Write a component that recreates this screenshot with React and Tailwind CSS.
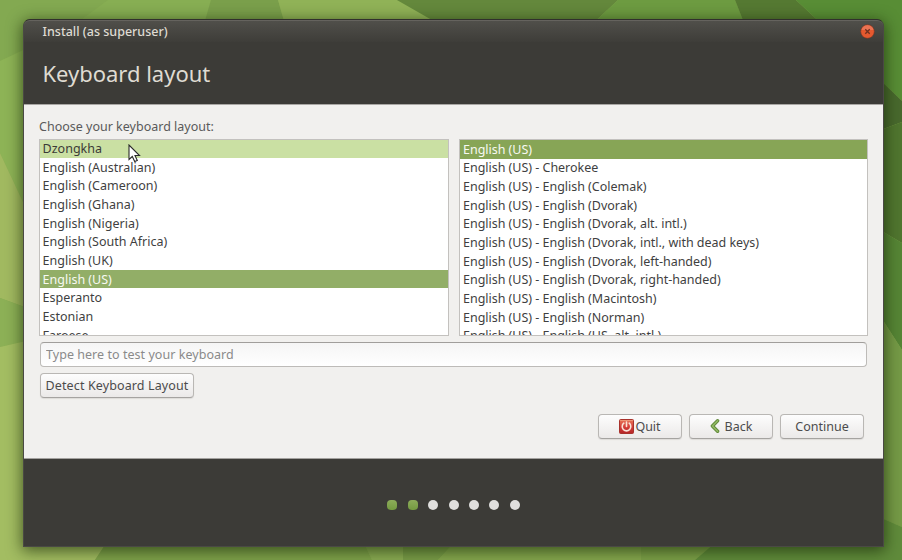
const LEFT = [
  ["Dzongkha", "hover"],
  ["English (Australian)"],
  ["English (Cameroon)"],
  ["English (Ghana)"],
  ["English (Nigeria)"],
  ["English (South Africa)"],
  ["English (UK)"],
  ["English (US)", "selected"],
  ["Esperanto"],
  ["Estonian"],
  ["Faroese"],
];

const RIGHT = [
  ["English (US)", "active"],
  ["English (US) - Cherokee"],
  ["English (US) - English (Colemak)"],
  ["English (US) - English (Dvorak)"],
  ["English (US) - English (Dvorak, alt. intl.)"],
  ["English (US) - English (Dvorak, intl., with dead keys)"],
  ["English (US) - English (Dvorak, left-handed)"],
  ["English (US) - English (Dvorak, right-handed)"],
  ["English (US) - English (Macintosh)"],
  ["English (US) - English (Norman)"],
  ["English (US) - English (US, alt. intl.)"],
];

const ROW_STYLES = {
  hover: "bg-[#cae0a3] text-[#3c3b37]",
  selected: "bg-[#92ae67] text-[#f7f9f2]",
  active: "bg-[#87a556] text-[#f7f9f2]",
};

function Wallpaper() {
  return (
    <svg className="absolute inset-0 h-full w-full" viewBox="0 0 902 560" preserveAspectRatio="none">
      <rect width="902" height="560" fill="#86aa50" />
      <path d="M0 0H108L70 28L0 61Z" fill="#83a951" />
      <path d="M108 0H211L203 28H70Z" fill="#87ae53" />
      <path d="M0 61L70 28V40L0 70Z" fill="#8db356" />
      <path d="M211 0H278L286 28H203Z" fill="#7a9f4b" />
      <path d="M278 0H397L446 28H286Z" fill="#90b257" />
      <path d="M397 0H618L588 28H446Z" fill="#64883c" />
      <path d="M618 0H735L746 28H588Z" fill="#6d9b41" />
      <path d="M735 0H796L826 28H746Z" fill="#557932" />
      <path d="M796 0H902V101L870 70L826 28Z" fill="#588d35" />
      <path d="M870 70L902 101V122L870 134Z" fill="#48692d" />
      <path d="M870 134L902 122V243L870 224Z" fill="#50762f" />
      <path d="M870 224L902 243V350L870 300Z" fill="#568535" />
      <path d="M870 300L902 350V527L870 513Z" fill="#759a46" />
      <path d="M870 513L902 527V560H870Z" fill="#608b3b" />
      <path d="M0 64L30 49V217L0 153Z" fill="#8db356" />
      <path d="M0 153L30 217V309L0 298Z" fill="#a1b960" />
      <path d="M0 298L30 309V340L0 347Z" fill="#8cb056" />
      <path d="M0 347L30 340V530H115L95 560H0Z" fill="#a3bd62" />
      <path d="M115 530H358L372 560H95Z" fill="#7fa24b" />
      <path d="M358 530H403V560H372Z" fill="#8aab53" />
      <path d="M403 530H466L438 560H403Z" fill="#799c48" />
      <path d="M466 530H641V560H438Z" fill="#85a74e" />
      <path d="M641 530H730L695 560H641Z" fill="#7ca048" />
      <path d="M730 530H880V560H695Z" fill="#608b3b" />
    </svg>
  );
}

function List({ items, className, innerClassName }) {
  return (
    <div className={`h-[197px] overflow-hidden border border-[#c3c1be] bg-white ${className}`}>
      <div className={innerClassName}>
        {items.map(([label, state]) => (
          <div
            key={label}
            className={`flex h-[18.66px] items-center whitespace-pre pt-px leading-[18px] ${innerClassName ? "pl-[2.6px]" : "pl-[3px]"} ${state ? ROW_STYLES[state] : ""}`}
          >
            {label}
          </div>
        ))}
      </div>
    </div>
  );
}

function Button({ children, className }) {
  return (
    <button
      className={`flex h-[25px] items-center justify-center whitespace-pre rounded-[4px] border border-[#b9b7b4] border-b-[#a5a3a0] bg-linear-to-b from-[#fdfdfd] to-[#ebe9e8] pt-px text-[#4c4c4c] shadow-[0_1px_1px_#dddbd8] ${className}`}
    >
      {children}
    </button>
  );
}

function PowerIcon() {
  return (
    <svg width="15" height="15" viewBox="0 0 15 15" className="mr-[1px] mb-[2px]">
      <defs>
        <linearGradient id="red" x1="0" y1="0" x2="0" y2="1">
          <stop offset="0" stopColor="#e8795a" />
          <stop offset="0.5" stopColor="#d6423a" />
          <stop offset="1" stopColor="#b32427" />
        </linearGradient>
      </defs>
      <rect x=".5" y=".5" width="14" height="14" rx="1" fill="url(#red)" stroke="#a8322c" />
      <path d="M1.5 2V1.5H13.5V2" fill="none" stroke="#efa080" strokeWidth=".8" />
      <path d="M4.8 4.2A4.3 4.3 0 1 0 10.2 4.2M7.5 3V7.5" fill="none" stroke="#fae3d8" strokeWidth="1.6" strokeLinecap="round" />
    </svg>
  );
}

function BackIcon() {
  return (
    <svg width="10" height="14" viewBox="0 0 10 14" className="mr-[5px] mb-[3px]">
      <path d="M7.6 1.8L2.4 7L7.6 12.2" fill="none" stroke="#628a3b" strokeWidth="3.4" strokeLinecap="round" strokeLinejoin="round" />
      <path d="M7.6 1.8L2.4 7L7.6 12.2" fill="none" stroke="#93ba64" strokeWidth="1.5" strokeLinecap="round" strokeLinejoin="round" />
    </svg>
  );
}

export default function App() {
  return (
    <div className="relative h-[560px] w-[902px] overflow-hidden bg-[#8aad52] font-['Noto_Sans',sans-serif] text-[12.5px] text-[#3f3f3f]">
      <Wallpaper />
      <div className="relative ml-[23px] mt-[19px] flex h-[528px] w-[861px] flex-col rounded-t-[7px] border border-[#4a4944] border-t-[#31302c] bg-[#3c3b37] shadow-[0_3px_15px_1px_rgba(20,35,5,0.65)]">
        <div className="flex h-[22px] items-center justify-between rounded-t-[6px] border-t border-[#65635e] bg-linear-to-b from-[#504f4a] to-[#3e3d39] pl-[18.6px] pr-[8px] text-[#dfdbd2]">
          <span className="pt-[2px] font-medium">Install (as superuser)</span>
          <svg width="15" height="15" viewBox="0 0 15 15">
            <circle cx="7.5" cy="7.5" r="6.8" fill="#e5592f" stroke="#7d3524" strokeWidth=".6" />
            <path d="M1.5 6A6.2 6.2 0 0 1 13.5 6Z" fill="#ee7f62" opacity=".7" />
            <path d="M5.3 5.3L9.7 9.7M9.7 5.3L5.3 9.7" stroke="#70301f" strokeWidth="1.3" />
          </svg>
        </div>
        <div className="flex h-[62px] items-center pl-[18.5px] pt-px text-[22px] text-[#dfdbd2]">
          <h1 className="tracking-[-0.02px]">Keyboard layout</h1>
        </div>
        <div className="flex h-[355px] flex-col border-t border-b border-t-[#a9a7a4] border-b-[#a3a19e] bg-[#f1f0ee] pl-[15px] pr-[15px]">
          <div className="mt-[13px] h-[21px] leading-[18px] text-[#5a5a5a]">Choose your keyboard layout:</div>
          <div className="flex gap-[10px]">
            <List items={LEFT} className="w-[410px]" innerClassName="-mt-[0.8px]" />
            <List items={RIGHT} className="w-[409px] tracking-[-0.02px]" />
          </div>
          <input
            className="ml-px mt-[6px] h-[25px] w-[827px] rounded-[4px] border border-[#bdbbb8] border-t-[#a09e9b] bg-linear-to-b from-[#f5f5f5] to-white px-[5px] tracking-[0.04px] placeholder:text-[#8a8a8a]"
            placeholder="Type here to test your keyboard"
          />
          <Button className="ml-px mt-[6px] w-[154px] tracking-[0.12px]">Detect Keyboard Layout</Button>
          <div className="mr-[4px] mt-[16px] flex justify-end gap-[7px]">
            <Button className="w-[84px]"><PowerIcon />Quit</Button>
            <Button className="w-[84px]"><BackIcon />Back</Button>
            <Button className="w-[84px]">Continue</Button>
          </div>
        </div>
        <div className="flex grow items-center justify-center gap-[10.4px] pt-[5px]">
          {[1, 1, 0, 0, 0, 0, 0].map((done, i) => (
            <span
              key={i}
              className={done ? "h-[10px] w-[10px] rounded-[4px] bg-linear-to-b from-[#8dac5a] to-[#749a40]" : "h-[10px] w-[10px] rounded-full bg-[#e0dfdd]"}
            />
          ))}
        </div>
      </div>
      <svg className="absolute left-[128px] top-[144px]" width="13" height="19" viewBox="0 0 13 19">
        <path d="M1 1V15.5L4.3 12.5L6.7 17.6L9.3 16.4L7 11.5H11.5Z" fill="#fff" stroke="#2b2b2b" strokeWidth="1.1" />
      </svg>
    </div>
  );
}
